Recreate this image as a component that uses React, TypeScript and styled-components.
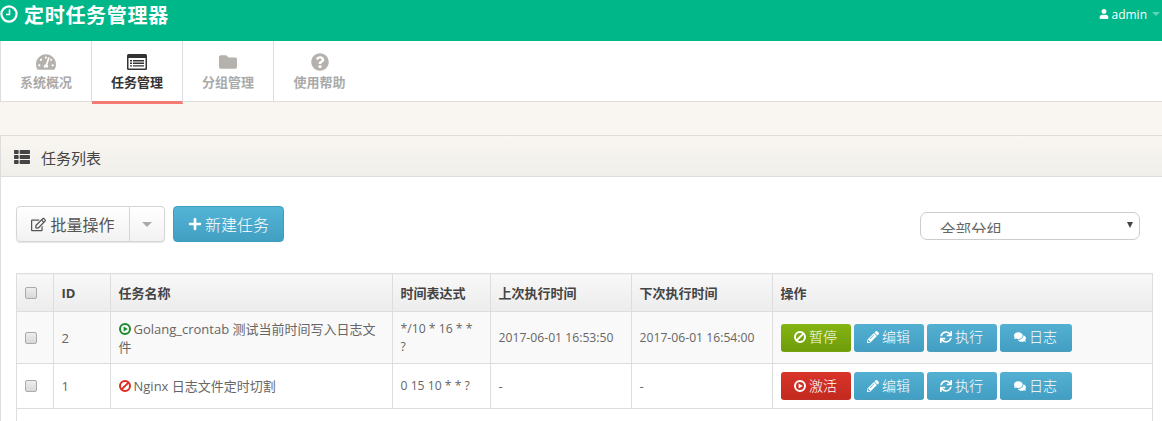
import React from 'react';
import styled, { createGlobalStyle } from 'styled-components';
import {
  FaComments,
  FaFolder,
  FaPencilAlt,
  FaPlus,
  FaQuestionCircle,
  FaRegEdit,
  FaSync,
  FaTachometerAlt,
  FaThList,
  FaUser,
} from 'react-icons/fa';

const GlobalStyle = createGlobalStyle`
  html, body {
    margin: 0;
    height: 100%;
    overflow: hidden;
    background: #fff;
  }
  body {
    font-family: "Open Sans", "Noto Sans CJK SC", sans-serif;
    font-size: 13px;
    color: #666;
  }
  * {
    box-sizing: border-box;
  }
`;

const TopBar = styled.div`
  height: 41px;
  background: #00b78a;
  display: flex;
  justify-content: space-between;
  color: #fff;
`;

const Brand = styled.div`
  display: flex;
  align-items: center;
  gap: 6px;
  height: 28px;
  font-size: 20px;
  font-weight: 700;
  letter-spacing: 0.7px;
`;

const UserMenu = styled.div`
  display: flex;
  align-items: center;
  height: 28px;
  gap: 2px;
  padding-right: 2px;
  font-size: 12px;
  svg {
    font-size: 10px;
  }
`;

const Caret = styled.span<{ $color: string; $size: number }>`
  display: inline-block;
  margin-left: 3px;
  border-left: ${(p) => p.$size}px solid transparent;
  border-right: ${(p) => p.$size}px solid transparent;
  border-top: ${(p) => p.$size}px solid ${(p) => p.$color};
`;

const Tabs = styled.div`
  height: 61px;
  display: flex;
  background: #fff;
  border-left: 1px solid #ddd;
  border-bottom: 1px solid #ddd;
`;

const Tab = styled.div<{ $active?: boolean }>`
  width: 91px;
  height: ${(p) => (p.$active ? '63px' : '60px')};
  display: flex;
  flex-direction: column;
  align-items: center;
  padding-top: 12px;
  border-right: 1px solid #ddd;
  border-bottom: ${(p) => (p.$active ? '3px solid #f47c72' : 'none')};
  color: ${(p) => (p.$active ? '#333' : '#aaa')};
  font-size: 13px;
  font-weight: 700;
  line-height: 18px;
  &:last-child {
    border-right: none;
  }
  svg {
    height: 18px;
    width: 20px;
    color: ${(p) => (p.$active ? '#333' : '#b5b2ae')};
    margin-bottom: 2px;
  }
`;

const Strip = styled.div`
  height: 33px;
  background: #f9f6f1;
`;

const Panel = styled.div`
  border-top: 1px solid #ddd;
  border-left: 1px solid #ddd;
  height: 286px;
`;

const PanelHead = styled.div`
  height: 41px;
  display: flex;
  align-items: center;
  gap: 11px;
  padding-left: 13px;
  padding-top: 2px;
  background: linear-gradient(to bottom, #f9f6f1, #f1efea);
  border-bottom: 1px solid #ddd;
  color: #444;
  font-size: 15px;
  svg {
    font-size: 16px;
  }
`;

const PanelBody = styled.div`
  padding: 29px 8px 0 15px;
`;

const Toolbar = styled.div`
  display: flex;
  justify-content: space-between;
  height: 67px;
  padding-right: 14px;
`;

const Actions = styled.div`
  display: flex;
  gap: 8px;
  align-items: flex-start;
`;

const SplitButton = styled.div`
  display: flex;
  height: 36px;
  border: 1px solid #d5d5d5;
  border-radius: 4px;
  background: linear-gradient(to bottom, #fff, #f2f2f2);
  box-shadow: 0 1px 1px rgba(0, 0, 0, 0.1);
  color: #555;
  font-size: 16px;
`;

const SplitMain = styled.div`
  width: 113px;
  display: flex;
  align-items: center;
  justify-content: center;
  gap: 4px;
  border-right: 1px solid #d5d5d5;
  svg {
    font-size: 15px;
  }
`;

const SplitCaret = styled.div`
  width: 34px;
  display: flex;
  align-items: center;
  justify-content: center;
  padding-right: 3px;
`;

const PrimaryButton = styled.div`
  width: 111px;
  height: 36px;
  display: flex;
  align-items: center;
  justify-content: center;
  gap: 3px;
  border-radius: 4px;
  border: 1px solid #3f9dbf;
  background: linear-gradient(to bottom, #54b4d6, #419fc2);
  color: #fff;
  font-size: 16px;
  font-weight: 300;
  svg {
    font-size: 14px;
  }
`;

const SelectWrap = styled.div`
  position: relative;
  width: 220px;
  height: 28px;
  margin-top: 6px;
`;

const GroupSelect = styled.select`
  display: block;
  width: 100%;
  height: 28px;
  appearance: none;
  padding: 9px 25px 6px 19px;
  border: 1px solid #ccc;
  border-radius: 7px;
  background: #fff;
  color: #666;
  font-family: inherit;
  font-size: 15.5px;
  line-height: 16px;
`;

const SelectArrow = styled.span`
  position: absolute;
  top: 10px;
  right: 7px;
  border-left: 3px solid transparent;
  border-right: 3px solid transparent;
  border-top: 6px solid #444;
`;

const TableWrap = styled.div`
  width: 1137px;
  height: 148px;
  border-left: 1px solid #ddd;
  border-right: 1px solid #ddd;
`;

const Table = styled.table`
  width: 100%;
  table-layout: fixed;
  border-collapse: collapse;
`;

const Th = styled.th<{ $w?: number }>`
  width: ${(p) => (p.$w ? `${p.$w}px` : 'auto')};
  height: 38px;
  padding: 0 8px;
  text-align: left;
  font-size: 13px;
  font-weight: 700;
  color: #444;
  background: linear-gradient(to bottom, #f8f8f8, #ececec);
  border: 1px solid #ddd;
  &:first-child {
    border-left: none;
  }
  &:last-child {
    border-right: none;
  }
`;

const Tr = styled.tr<{ $shade?: boolean }>`
  background: ${(p) => (p.$shade ? '#f9f9f9' : '#fff')};
`;

const Td = styled.td<{ $h: number; $small?: boolean }>`
  height: ${(p) => p.$h}px;
  padding: 0 8px;
  line-height: 18px;
  font-size: ${(p) => (p.$small ? '12.2px' : '13px')};
  color: #666;
  border: 1px solid #ddd;
  &:first-child {
    border-left: none;
  }
  &:last-child {
    border-right: none;
  }
`;

const Check = styled.span`
  display: block;
  width: 12px;
  height: 12px;
  border: 1px solid #aaa;
  border-radius: 2px;
  background: linear-gradient(to bottom, #eee, #d8d8d8);
`;

const StatusIcon = styled.span<{ $color: string }>`
  display: inline-flex;
  vertical-align: -1px;
  margin-right: 3px;
  color: ${(p) => p.$color};
`;

const RowButtons = styled.div`
  display: flex;
  gap: 3px;
`;

const RowButton = styled.div<{ $kind?: 'info' | 'success' | 'danger'; $w?: number }>`
  width: ${(p) => p.$w ?? 70}px;
  height: 28px;
  display: flex;
  align-items: center;
  justify-content: center;
  gap: 3px;
  border-radius: 3px;
  border-bottom: 1px solid rgba(0, 0, 0, 0.1);
  color: #fff;
  font-size: 14px;
  font-weight: 300;
  background: ${(p) =>
    p.$kind === 'success'
      ? 'linear-gradient(to bottom, #84b511, #6f9c0c)'
      : p.$kind === 'danger'
        ? 'linear-gradient(to bottom, #d9342a, #c32a1e)'
        : 'linear-gradient(to bottom, #54b0d2, #429fc3)'};
  svg {
    font-size: 12px;
  }
`;

const ClockIcon = () => (
  <svg width="18" height="18" viewBox="0 0 18 18" fill="none" stroke="currentColor">
    <circle cx="9" cy="9" r="7.6" strokeWidth="2.2" />
    <path d="M9.5 4.5v5H6" strokeWidth="1.6" />
  </svg>
);

const PlayRing = ({ size = 12 }: { size?: number }) => (
  <svg width={size} height={size} viewBox="0 0 12 12">
    <circle cx="6" cy="6" r="5" fill="none" stroke="currentColor" strokeWidth="2" />
    <path d="M4.6 3.4 8.8 6 4.6 8.6z" fill="currentColor" />
  </svg>
);

const BanRing = ({ size = 12 }: { size?: number }) => (
  <svg width={size} height={size} viewBox="0 0 12 12" fill="none" stroke="currentColor" strokeWidth="2">
    <circle cx="6" cy="6" r="5" />
    <path d="M2.6 9.4 9.4 2.6" />
  </svg>
);

const TableIcon = () => (
  <svg viewBox="0 0 20 16">
    <rect x="0" y="0" width="20" height="16" rx="1.5" fill="#333" />
    <rect x="1.5" y="4" width="17" height="10.5" fill="#fff" />
    <path d="M3 6h2v1.4H3zM6 6h11v1.4H6zM3 8.6h2V10H3zM6 8.6h11V10H6zM3 11.2h2v1.4H3zM6 11.2h11v1.4H6z" fill="#333" />
  </svg>
);

const Edit = () => (
  <RowButton>
    <FaPencilAlt />
    编辑
  </RowButton>
);
const Run = () => (
  <RowButton>
    <FaSync />
    执行
  </RowButton>
);
const Logs = () => (
  <RowButton $w={72}>
    <FaComments />
    日志
  </RowButton>
);

export default function App() {
  return (
    <>
      <GlobalStyle />
      <TopBar>
        <Brand>
          <ClockIcon />
          定时任务管理器
        </Brand>
        <UserMenu>
          <FaUser />
          admin
          <Caret $color="#5fd3b5" $size={4} />
        </UserMenu>
      </TopBar>
      <Tabs>
        <Tab>
          <FaTachometerAlt />
          系统概况
        </Tab>
        <Tab $active>
          <TableIcon />
          任务管理
        </Tab>
        <Tab>
          <FaFolder />
          分组管理
        </Tab>
        <Tab>
          <FaQuestionCircle />
          使用帮助
        </Tab>
      </Tabs>
      <Strip />
      <Panel>
        <PanelHead>
          <FaThList />
          任务列表
        </PanelHead>
        <PanelBody>
          <Toolbar>
            <Actions>
              <SplitButton>
                <SplitMain>
                  <FaRegEdit />
                  批量操作
                </SplitMain>
                <SplitCaret>
                  <Caret $color="#aaa" $size={5} />
                </SplitCaret>
              </SplitButton>
              <PrimaryButton>
                <FaPlus />
                新建任务
              </PrimaryButton>
            </Actions>
            <SelectWrap>
              <GroupSelect>
                <option>全部分组</option>
              </GroupSelect>
              <SelectArrow />
            </SelectWrap>
          </Toolbar>
          <TableWrap>
            <Table>
              <thead>
                <tr>
                  <Th $w={36}>
                    <Check />
                  </Th>
                  <Th $w={57}>ID</Th>
                  <Th $w={282}>任务名称</Th>
                  <Th $w={98}>时间表达式</Th>
                  <Th $w={141}>上次执行时间</Th>
                  <Th $w={141}>下次执行时间</Th>
                  <Th>操作</Th>
                </tr>
              </thead>
              <tbody>
                <Tr $shade>
                  <Td $h={52}>
                    <Check />
                  </Td>
                  <Td $h={52}>2</Td>
                  <Td $h={52}>
                    <StatusIcon $color="#1a8a2a">
                      <PlayRing />
                    </StatusIcon>
                    Golang_crontab 测试当前时间写入日志文件
                  </Td>
                  <Td $h={52} $small>
                    */10 * 16 * *
                    <br />?
                  </Td>
                  <Td $h={52} $small>
                    2017-06-01 16:53:50
                  </Td>
                  <Td $h={52} $small>
                    2017-06-01 16:54:00
                  </Td>
                  <Td $h={52}>
                    <RowButtons>
                      <RowButton $kind="success">
                        <BanRing />
                        暂停
                      </RowButton>
                      <Edit />
                      <Run />
                      <Logs />
                    </RowButtons>
                  </Td>
                </Tr>
                <Tr>
                  <Td $h={45}>
                    <Check />
                  </Td>
                  <Td $h={45}>1</Td>
                  <Td $h={45}>
                    <StatusIcon $color="#e02a1e">
                      <BanRing />
                    </StatusIcon>
                    Nginx 日志文件定时切割
                  </Td>
                  <Td $h={45} $small>
                    0 15 10 * * ?
                  </Td>
                  <Td $h={45}>-</Td>
                  <Td $h={45}>-</Td>
                  <Td $h={45}>
                    <RowButtons>
                      <RowButton $kind="danger">
                        <PlayRing />
                        激活
                      </RowButton>
                      <Edit />
                      <Run />
                      <Logs />
                    </RowButtons>
                  </Td>
                </Tr>
              </tbody>
            </Table>
          </TableWrap>
        </PanelBody>
      </Panel>
    </>
  );
}
